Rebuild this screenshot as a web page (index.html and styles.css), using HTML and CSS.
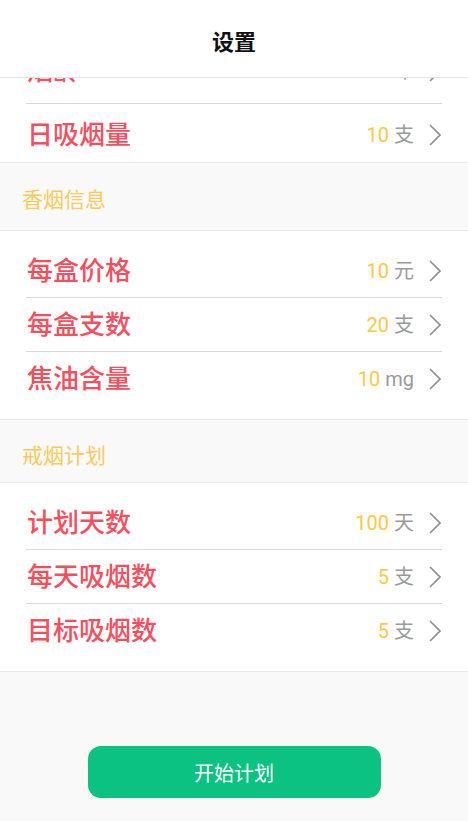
FILE: index.html
```html
<!DOCTYPE html>
<html lang="zh-CN">
<head>
    <meta charset="UTF-8">
    <meta name="viewport" content="width=device-width, initial-scale=1.0">
    <title>设置</title>
    <link rel="stylesheet" href="styles.css">
</head>
<body>

    <div class="page">
        <header class="topbar">
            <h1>设置</h1>
        </header>

        <main class="content">
            <div class="scroll">

                <section class="group group-first">
                    <div class="row row-tall row-up">
                        <span class="label">烟龄</span>
                        <span class="value"><span class="num">5</span><span class="unit">年</span></span>
                        <svg class="arrow" viewBox="0 0 12 22"><polyline points="1,1 11,11 1,21"/></svg>
                    </div>
                    <div class="row row-tall row-down">
                        <span class="label">日吸烟量</span>
                        <span class="value"><span class="num">10</span><span class="unit">支</span></span>
                        <svg class="arrow" viewBox="0 0 12 22"><polyline points="1,1 11,11 1,21"/></svg>
                    </div>
                </section>

                <div class="section-title">香烟信息</div>

                <section class="group">
                    <div class="row">
                        <span class="label">每盒价格</span>
                        <span class="value"><span class="num">10</span><span class="unit">元</span></span>
                        <svg class="arrow" viewBox="0 0 12 22"><polyline points="1,1 11,11 1,21"/></svg>
                    </div>
                    <div class="row">
                        <span class="label">每盒支数</span>
                        <span class="value"><span class="num">20</span><span class="unit">支</span></span>
                        <svg class="arrow" viewBox="0 0 12 22"><polyline points="1,1 11,11 1,21"/></svg>
                    </div>
                    <div class="row">
                        <span class="label">焦油含量</span>
                        <span class="value"><span class="num">10</span><span class="unit">mg</span></span>
                        <svg class="arrow" viewBox="0 0 12 22"><polyline points="1,1 11,11 1,21"/></svg>
                    </div>
                </section>

                <div class="section-title section-title-sm">戒烟计划</div>

                <section class="group">
                    <div class="row">
                        <span class="label">计划天数</span>
                        <span class="value"><span class="num">100</span><span class="unit">天</span></span>
                        <svg class="arrow" viewBox="0 0 12 22"><polyline points="1,1 11,11 1,21"/></svg>
                    </div>
                    <div class="row">
                        <span class="label">每天吸烟数</span>
                        <span class="value"><span class="num">5</span><span class="unit">支</span></span>
                        <svg class="arrow" viewBox="0 0 12 22"><polyline points="1,1 11,11 1,21"/></svg>
                    </div>
                    <div class="row">
                        <span class="label">目标吸烟数</span>
                        <span class="value"><span class="num">5</span><span class="unit">支</span></span>
                        <svg class="arrow" viewBox="0 0 12 22"><polyline points="1,1 11,11 1,21"/></svg>
                    </div>
                </section>

                <div class="actions">
                    <button class="start-btn">开始计划</button>
                </div>

            </div>
        </main>
    </div>

</body>
</html>
```

FILE: styles.css
```css
body {
    margin: 0;
    padding: 0;
    background-color: #f9f9f9;
    font-family: Roboto, "Noto Sans CJK SC", sans-serif;
}

.page {
    height: 100vh;
    display: flex;
    flex-direction: column;
    overflow: hidden;
}

.topbar {
    height: 78px;
    box-sizing: border-box;
    padding-top: 8px;
    flex-shrink: 0;
    display: flex;
    align-items: center;
    justify-content: center;
    background-color: #fff;
    border-bottom: 1px solid #e2e2e2;
    position: relative;
    z-index: 2;
}

.topbar h1 {
    margin: 0;
    font-size: 22px;
    line-height: 22px;
    font-weight: bold;
    color: #111;
}

.content {
    flex: 1;
    overflow: hidden;
}

.group {
    background-color: #fff;
    border-top: 1px solid #e8e8e8;
    border-bottom: 1px solid #e8e8e8;
    padding: 13px 0 14px;
}

.group-first {
    margin-top: -46px;
    padding-bottom: 0;
}

.row {
    height: 53px;
    margin: 0 26px;
    display: flex;
    align-items: center;
    border-bottom: 1px solid #dadada;
}

.row:last-child {
    border-bottom: none;
}

.row-tall {
    height: 58px;
    box-sizing: border-box;
}

.row-up {
    padding-bottom: 8px;
}

.row-down {
    padding-top: 4px;
}

.label {
    flex: 1;
    font-size: 26px;
    line-height: 26px;
    font-weight: 500;
    color: #f64e5d;
    padding-left: 1px;
}

.value {
    display: flex;
    align-items: baseline;
    font-size: 20px;
    line-height: 20px;
}

.num {
    color: #ffc845;
}

.unit {
    color: #9a9a9a;
    margin-left: 5px;
}

.arrow {
    width: 12px;
    height: 22px;
    margin-left: 15px;
    margin-right: 1px;
    fill: none;
    stroke: #8f8f8f;
    stroke-width: 1.6;
}

.section-title {
    padding: 27px 22px 19px;
    font-size: 21px;
    line-height: 21px;
    color: #fdc95c;
}

.section-title-sm {
    padding: 26px 22px 15px;
}

.actions {
    margin-top: 74px;
    display: flex;
    justify-content: center;
}

.start-btn {
    width: 293px;
    height: 52px;
    border: none;
    border-radius: 13px;
    background-color: #0bc282;
    color: #fff;
    font-size: 20px;
    font-family: Roboto, "Noto Sans CJK SC", sans-serif;
    cursor: pointer;
}
```
